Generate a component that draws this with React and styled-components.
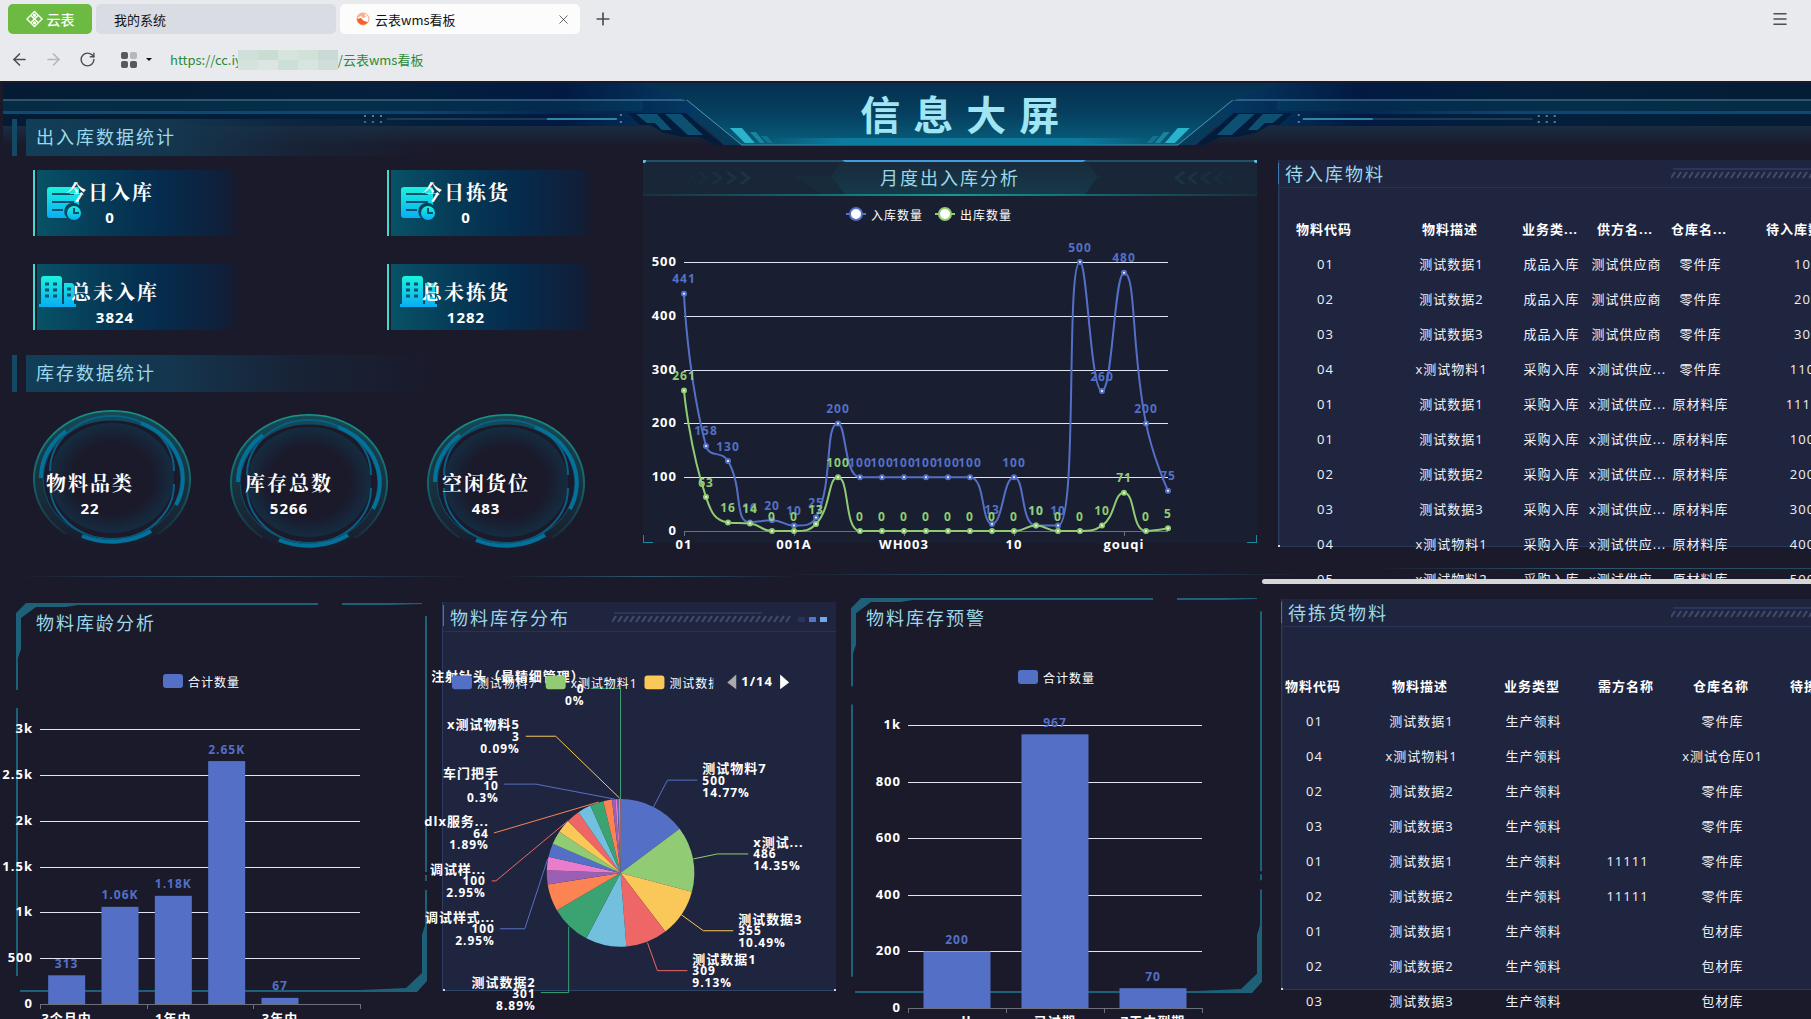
import React from 'react'
import styled, { createGlobalStyle } from 'styled-components'
import { ArrowLeft, ArrowRight, Menu, Plus, RotateCw, X } from 'lucide-react'

const GlobalStyle = createGlobalStyle`
  * {
    box-sizing: border-box;
  }
  body {
    margin: 0;
    background: #1a1a2b;
    font-family: "Open Sans", "Noto Sans CJK SC", sans-serif;
  }
  h1, h2, p {
    margin: 0;
  }
`;

const palette = ['#5470c6', '#91cc75', '#fac858', '#ee6666', '#73c0de', '#3ba272', '#fc8452', '#9a60b4', '#ea7ccc']

const monthly = {
  names: { 0: '01', 5: '001A', 10: 'WH003', 15: '10', 20: 'gouqi' },
  inbound: [441, 158, 130, 16, 20, 10, 25, 200, 100, 100, 100, 100, 100, 100, 13, 100, 10, 10, 500, 260, 480, 200, 75],
  outbound: [261, 63, 16, 14, 0, 0, 13, 100, 0, 0, 0, 0, 0, 0, 0, 0, 10, 0, 0, 10, 71, 0, 5],
}

const stats = [
  { label: '今日入库', value: '0', icon: 'doc', center: 77, iconLeft: 12 },
  { label: '今日拣货', value: '0', icon: 'doc', center: 79, iconLeft: 12 },
  { label: '总未入库', value: '3824', icon: 'building', center: 82, iconLeft: 4 },
  { label: '总未拣货', value: '1282', icon: 'building', center: 79, iconLeft: 11 },
]

const rings = [
  { label: '物料品类', value: '22' },
  { label: '库存总数', value: '5266' },
  { label: '空闲货位', value: '483' },
]

const inboundTable = {
  widths: [124, 128, 72, 78, 70, 134],
  head: ['物料代码', '物料描述', '业务类...', '供方名...', '仓库名...', '待入库数量'],
  rows: [
    ['01', '测试数据1', '成品入库', '测试供应商', '零件库', '10'],
    ['02', '测试数据2', '成品入库', '测试供应商', '零件库', '20'],
    ['03', '测试数据3', '成品入库', '测试供应商', '零件库', '30'],
    ['04', 'x测试物料1', '采购入库', 'x测试供应...', '零件库', '110'],
    ['01', '测试数据1', '采购入库', 'x测试供应...', '原材料库', '1111'],
    ['01', '测试数据1', '采购入库', 'x测试供应...', '原材料库', '100'],
    ['02', '测试数据2', '采购入库', 'x测试供应...', '原材料库', '200'],
    ['03', '测试数据3', '采购入库', 'x测试供应...', '原材料库', '300'],
    ['04', 'x测试物料1', '采购入库', 'x测试供应...', '原材料库', '400'],
    ['05', 'x测试物料2', '采购入库', 'x测试供应...', '原材料库', '500'],
  ],
}

const pickTable = {
  widths: [102, 112, 112, 76, 114, 94],
  head: ['物料代码', '物料描述', '业务类型', '需方名称', '仓库名称', '待拣货数量'],
  rows: [
    ['01', '测试数据1', '生产领料', '', '零件库', ''],
    ['04', 'x测试物料1', '生产领料', '', 'x测试仓库01', ''],
    ['02', '测试数据2', '生产领料', '', '零件库', ''],
    ['03', '测试数据3', '生产领料', '', '零件库', ''],
    ['01', '测试数据1', '生产领料', '11111', '零件库', ''],
    ['02', '测试数据2', '生产领料', '11111', '零件库', ''],
    ['01', '测试数据1', '生产领料', '', '包材库', ''],
    ['02', '测试数据2', '生产领料', '', '包材库', ''],
    ['03', '测试数据3', '生产领料', '', '包材库', ''],
  ],
}

const pieValues = [500, 486, 355, 309, 302, 301, 200, 105, 100, 100, 100, 100, 100, 100, 100, 64, 25, 15, 10, 7, 3, 3]

// every point is relative to the centre of the pie
const pieLabels = [
  { lines: ['测试物料7', '500', '14.77%'], color: 0, path: '33,-66 47,-93 77,-93', x: 82, y: -93 },
  { lines: ['x测试...', '486', '14.35%'], color: 1, path: '73,-14 97,-19 128,-19', x: 133, y: -19 },
  { lines: ['测试数据3', '355', '10.49%'], color: 2, path: '61,42 83,58 113,58', x: 118, y: 58 },
  { lines: ['测试数据1', '309', '9.13%'], color: 3, path: '27,70 37,98 67,98', x: 72, y: 98 },
  { lines: ['测试数据2', '301', '8.89%'], color: 5, path: '-52,54 -52,120 -80,120', x: -85, y: 121, end: true },
  { lines: ['调试样式...', '100', '2.95%'], color: 0, path: '-73,-14 -96,56 -121,56', x: -126, y: 56, end: true },
  { lines: ['调试样...', '100', '2.95%'], color: 3, path: '-53,-52 -125,8 -129,8', x: -135, y: 8, end: true },
  { lines: ['dlx服务...', '64', '1.89%'], color: 6, path: '-22,-71 -127,-40', x: -132, y: -40, end: true },
  { lines: ['车门把手', '10', '0.3%'], color: 0, path: '-6,-74 -85,-89 -117,-89', x: -122, y: -88, end: true },
  { lines: ['x测试物料5', '3', '0.09%'], color: 2, path: '-1,-75 -65,-137 -95,-137', x: -101, y: -137, end: true },
  { lines: ['注射针头（最精细管理）', '0', '0%'], color: 5, path: '0,-74 0,-185 -30,-185', x: -36, y: -185, end: true },
]

const smoothPath = (pts) => {
  const clamp = (v, a, b) => Math.max(Math.min(a, b), Math.min(Math.max(a, b), v))
  let d = `M${pts[0][0]},${pts[0][1]}`
  let cp = pts[0]
  for (let i = 1; i < pts.length; i++) {
    const [x, y] = pts[i]
    const prev = pts[i - 1]
    const next = pts[i + 1]
    let c1 = [x, y]
    let c2 = [x, y]
    if (next) {
      const lenPrev = Math.hypot(x - prev[0], y - prev[1])
      const lenNext = Math.hypot(next[0] - x, next[1] - y)
      const ratio = lenNext / (lenNext + lenPrev)
      const vx = next[0] - prev[0]
      const vy = next[1] - prev[1]
      c2 = [clamp(x + vx * 0.5 * ratio, x, next[0]), clamp(y + vy * 0.5 * ratio, y, next[1])]
      c1 = [x - ((c2[0] - x) * lenPrev) / lenNext, y - ((c2[1] - y) * lenPrev) / lenNext]
      c1 = [clamp(c1[0], prev[0], x), clamp(c1[1], prev[1], y)]
      c2 = [x + ((x - c1[0]) * lenNext) / lenPrev, y + ((y - c1[1]) * lenNext) / lenPrev]
    }
    d += `C${cp[0]},${cp[1]} ${c1[0]},${c1[1]} ${x},${y}`
    cp = c2
  }
  return d
}

const LogoIcon = () => (
  <svg width="17" height="18" viewBox="0 0 18 18" fill="none" stroke="#fff" strokeWidth="1.5">
    <path d="M9 1 17 9 9 17 1 9Z" />
    <path d="M5 5 13 13M13 5 5 13" />
    <circle cx="9" cy="5" r="1" fill="#fff" />
    <circle cx="9" cy="13" r="1" fill="#fff" />
  </svg>
)

const SiteIcon = () => (
  <svg width="14" height="14" viewBox="0 0 14 14">
    <circle cx="7" cy="7" r="6" fill="#fff" stroke="#f2a27c" strokeWidth="1" />
    <path d="M7 1A6 6 0 0 0 1 6L5 4 7 6 10 5 8 1Z" fill="#f9b08c" />
    <path d="M1 7 5 6 8 9 12 10A6 6 0 0 1 2 10Z" fill="#f0642c" />
  </svg>
)

const AppsIcon = () => (
  <svg width="16" height="16" viewBox="0 0 16 16" fill="#55585e">
    <rect x="0" y="0" width="7" height="7" rx="2" />
    <rect x="9" y="0" width="7" height="7" rx="2" fill="#b5b7bc" />
    <rect x="0" y="9" width="7" height="7" rx="2" />
    <rect x="9" y="9" width="7" height="7" rx="2" />
  </svg>
)

const DocIcon = () => (
  <svg width="34" height="34" viewBox="0 0 34 34">
    <defs>
      <linearGradient id="doc" x1="0" y1="0" x2="0" y2="1">
        <stop offset="0" stopColor="#1cf2dc" />
        <stop offset="1" stopColor="#08aef4" />
      </linearGradient>
    </defs>
    <path d="M3 1H30Q32 1 32 3V19A8 8 0 0 0 20 32H3Q0 32 0 29V4Q0 1 3 1Z" fill="url(#doc)" />
    <path d="M5 8H27M5 16H27M5 24H16" stroke="#07506e" strokeWidth="2" />
    <circle cx="27" cy="27" r="7" fill="url(#doc)" />
    <path d="M27 22V27H32" fill="none" stroke="#07506e" strokeWidth="2" />
  </svg>
)

const BuildingIcon = () => (
  <svg width="37" height="32" viewBox="0 0 37 32">
    <defs>
      <linearGradient id="building" x1="0" y1="0" x2="0" y2="1">
        <stop offset="0" stopColor="#1cf2dc" />
        <stop offset="1" stopColor="#08aef4" />
      </linearGradient>
    </defs>
    <path d="M0 31V28H2V3Q2 0 5 0H20Q23 0 23 3V28H25V7H32Q35 7 35 10V28H37V31Z" fill="url(#building)" />
    <path d="M6 8H10M14 8H18M6 14H10M14 14H18M6 20H10M14 20H18M28 13H32M28 19H32" stroke="#07506e" strokeWidth="3" />
  </svg>
)

const BannerSide = () => (
  <>
    <rect x="3" y="2" width="700" height="43" fill="url(#sideFill)" />
    <rect x="3" y="45" width="712" height="20" fill="url(#fade)" />
    <path d="M3 19H687L742 64" fill="none" stroke="#4f93a8" />
    <rect x="3" y="20" width="640" height="10" fill="#0a4a66" opacity=".35" />
    <rect x="3" y="30" width="620" height="3" fill="url(#rail)" />
    <path d="M387 38H547" stroke="#31586b" />
    <path d="M547 38H617" stroke="#2f86a3" strokeWidth="2" />
    <path d="M364 35h2m6 0h2m6 0h2M364 41h2m6 0h2m6 0h2M620 34h2M620 41h2" stroke="#54808e" strokeWidth="2" />
    <path d="M628 32H686L722 64H716L700 56H684L664 52 650 44H640Z" fill="#031c3c" />
    <path d="M636 33H646L656 42H647ZM646 33H657L672 49H662ZM665 33H681L703 54H688Z" fill="#0d5072" />
    <path d="M690 33H704L742 64H724Z" fill="#083a5c" />
  </>
)

const BannerArt = () => (
  <BannerSvg viewBox="0 0 1920 66" preserveAspectRatio="none" aria-hidden="true">
    <defs>
      <linearGradient id="sideFill" x1="0" x2="1">
        <stop offset="0" stopColor="#051b33" />
        <stop offset=".55" stopColor="#03203c" />
        <stop offset=".8" stopColor="#021a42" />
        <stop offset="1" stopColor="#053a66" />
      </linearGradient>
      <linearGradient id="fade" x1="0" y1="0" x2="0" y2="1">
        <stop offset="0" stopColor="#1a2c40" />
        <stop offset="1" stopColor="#1a1a2b" />
      </linearGradient>
      <linearGradient id="rail" x1="0" x2="1">
        <stop offset="0" stopColor="#0d4c72" />
        <stop offset=".65" stopColor="#0b4672" />
        <stop offset="1" stopColor="#0b4672" stopOpacity="0" />
      </linearGradient>
      <linearGradient id="centerFill" x1="0" y1="0" x2="0" y2="1">
        <stop offset="0" stopColor="#05304f" />
        <stop offset=".5" stopColor="#064060" />
        <stop offset="1" stopColor="#085f7c" />
      </linearGradient>
      <linearGradient id="baseGlow" x1="0" x2="1">
        <stop offset="0" stopColor="#0d7ba0" stopOpacity="0" />
        <stop offset=".2" stopColor="#0d7ba0" />
        <stop offset=".8" stopColor="#0d7ba0" />
        <stop offset="1" stopColor="#0d7ba0" stopOpacity="0" />
      </linearGradient>
    </defs>
    <g><BannerSide /></g>
    <g transform="translate(1920 0) scale(-1 1)"><BannerSide /></g>
    <path d="M640 2H1280L1233 20 1178 64H742L687 20Z" fill="url(#centerFill)" />
    <path d="M687 19 742 64H1178L1233 19" fill="none" stroke="#4f93a8" />
    <rect x="770" y="57" width="380" height="7" fill="url(#baseGlow)" />
    <g fill="#2bb3cc">
      <path d="M730 47H742L755 62H745ZM1190 47H1178L1165 62H1175Z" />
      <path d="M750 51H756L765 62H760ZM1170 51H1164L1155 62H1160Z" opacity=".5" />
      <path d="M761 55H767L773 62H768ZM1159 55H1153L1147 62H1152Z" opacity=".3" />
    </g>
  </BannerSvg>
)

const RingArt = () => (
  <svg width="158" height="134" viewBox="0 0 158 134" fill="none" aria-hidden="true">
    <defs>
      <linearGradient id="ringEdge" x1="0" y1="0" x2="0" y2="1">
        <stop offset="0" stopColor="#1b9488" />
        <stop offset=".6" stopColor="#14606a" />
        <stop offset="1" stopColor="#1a2a3a" />
      </linearGradient>
      <radialGradient id="ringGlow">
        <stop offset=".65" stopColor="#0c4d68" stopOpacity="0" />
        <stop offset="1" stopColor="#0c4d68" stopOpacity=".35" />
      </radialGradient>
      <linearGradient id="ringBand" x1="0" y1="0" x2="0" y2="1">
        <stop offset="0" stopColor="#12545c" stopOpacity=".8" />
        <stop offset="1" stopColor="#12545c" stopOpacity=".05" />
      </linearGradient>
    </defs>
    <path d="M33 124A78 68 0 1 1 125 124" stroke="url(#ringEdge)" strokeWidth="2" />
    <ellipse cx="79" cy="69" rx="73" ry="63" stroke="url(#ringBand)" strokeWidth="9" />
    <ellipse cx="79" cy="68" rx="62" ry="55" fill="url(#ringGlow)" />
    <path d="M17 61A62 55 0 0 1 141 61M141 74A62 55 0 0 1 17 74" stroke="#0a5f85" strokeWidth="2" />
    <ellipse cx="79" cy="69" rx="69" ry="60" stroke="#0c4d6a" />
    <path d="M8 68A71 61 0 0 1 33 21M108 13A70 61 0 0 1 143 95M118 121A71 64 0 0 1 49 126" stroke="#04719a" strokeWidth="4" />
  </svg>
)

const FrameArt = () => (
  <FrameSvg viewBox="0 0 411 390" preserveAspectRatio="none" aria-hidden="true">
    <g fill="#1d6077">
      <path d="M0 10 10 0H302V2H62L50 4H20L5 15V46L2 55V87H0Z" />
      <path d="M326 0H406V1L372 2H326ZM0 105H2V373H0ZM4 387H400V389H4ZM409 13H411V269H409ZM409 272H411V278H409Z" />
      <path d="M411 287V378L401 389H345V387L390 385 406 370V332L409 322V287Z" />
    </g>
  </FrameSvg>
)

const HatchArt = ({ dots }) => (
  <HatchSvg width="216" height="12" viewBox="0 0 216 12" aria-hidden="true">
    <path d="M2 1H150" stroke="#32467a" />
    {Array.from({ length: 30 }, (_, i) => (
      <path key={i} d={`M${i * 6} 10 L${i * 6 + 4} 4`} stroke="#414c6a" strokeWidth="2" />
    ))}
    {dots && (
      <>
        <rect x="186" y="5" width="7" height="5" fill="#2a3263" />
        <rect x="197" y="5" width="7" height="5" fill="#4f76cc" />
        <rect x="208" y="5" width="7" height="5" fill="#70a8ec" />
      </>
    )}
  </HatchSvg>
)

const TrendHeadArt = () => (
  <TrendHeadSvg viewBox="0 0 614 36" preserveAspectRatio="none" aria-hidden="true">
    <defs>
      <linearGradient id="trendBase" x1="0" x2="1">
        <stop offset="0" stopColor="#128c8c" stopOpacity=".1" />
        <stop offset=".5" stopColor="#159a94" />
        <stop offset="1" stopColor="#128c8c" stopOpacity=".1" />
      </linearGradient>
      <linearGradient id="trendFill" x1="0" y1="0" x2="0" y2="1">
        <stop offset="0" stopColor="#192a3c" />
        <stop offset="1" stopColor="#153a49" />
      </linearGradient>
    </defs>
    <rect width="614" height="36" fill="#182637" />
    <path d="M150 16H460L430 35H180Z" fill="#182b3b" />
    <path d="M188 16 199 2H443L455 16 442 35H203Z" fill="url(#trendFill)" />
    <path d="M0 1H614" stroke="#2a7d9a" />
    <path d="M199 0H443L440 2H202Z" fill="#3f9fdd" />
    <circle cx="1" cy="1" r="2" fill="#63c0dc" />
    <circle cx="613" cy="1" r="2" fill="#63c0dc" />
    <rect y="34" width="614" height="2" fill="url(#trendBase)" />
    <g stroke="#1b3848" strokeWidth="3" fill="none">
      {[0, 1, 2, 3, 4, 5].map((i) => (
        <g key={i} opacity={0.1 + i * 0.14}>
          <path d={`M${28 + i * 14} 12 L${36 + i * 14} 18 L${28 + i * 14} 24`} />
          <path d={`M${606 - i * 13} 12 L${598 - i * 13} 18 L${606 - i * 13} 24`} />
        </g>
      ))}
    </g>
  </TrendHeadSvg>
)

const TrendChart = () => {
  const px = (i) => 41 + i * 22
  const py = (v) => 335 - v * 0.538
  const series = [
    { data: monthly.inbound, color: palette[0] },
    { data: monthly.outbound, color: palette[1] },
  ]
  return (
    <ChartSvg viewBox="0 0 614 356" $height={356} role="img" aria-label="月度出入库分析">
      {[['入库数量', 213, '#5470c6'], ['出库数量', 302, '#91cc75']].map(([name, x, color]) => (
        <g key={name}>
          <path d={`M${x - 10} 18H${x + 10}`} stroke={color} strokeWidth="2" />
          <circle cx={x} cy="18" r="6" fill="#fff" stroke={color} strokeWidth="2" />
          <LegendText x={x + 15} y="19">{name}</LegendText>
        </g>
      ))}
      {[0, 100, 200, 300, 400, 500].map((v) => (
        <g key={v}>
          <path d={`M41 ${Math.round(py(v)) + 0.5}H525`} stroke={v ? '#e0e6f1' : '#6e7079'} />
          <AxisText x="34" y={py(v) - 1} textAnchor="end">{v}</AxisText>
        </g>
      ))}
      {Object.keys(monthly.names).map((i) => (
        <g key={i}>
          <path d={`M${px(i) + 0.5} 335v5`} stroke="#6e7079" />
          <AxisText x={px(i)} y="348" textAnchor="middle">{monthly.names[i]}</AxisText>
        </g>
      ))}
      {series.map(({ data, color }) => (
        <g key={color}>
          <path d={smoothPath(data.map((v, i) => [px(i), py(v)]))} fill="none" stroke={color} strokeWidth="2" />
          {data.map((v, i) => (
            <g key={i}>
              <circle cx={px(i)} cy={py(v)} r="2" fill="#fff" stroke={color} strokeWidth="2" />
              <ValueText x={px(i)} y={py(v) - 15} fill={color}>{v}</ValueText>
            </g>
          ))}
        </g>
      ))}
    </ChartSvg>
  )
}

const BarChart = ({ label, width, left, right, top, bottom, max, ticks, bars, barWidth, slots, names, nameY, legendX, legendY, tickEvery }) => {
  const step = (right - left) / slots
  const py = (v) => bottom - ((bottom - top) * v) / max
  return (
    <ChartSvg viewBox={`0 0 ${width} 400`} $height={400} role="img" aria-label={label}>
      <rect x={legendX} y={legendY - 7} width="20" height="14" rx="3" fill={palette[0]} />
      <LegendText x={legendX + 25} y={legendY + 1}>合计数量</LegendText>
      {ticks.map(([text, v]) => (
        <g key={text}>
          <path d={`M${left} ${Math.round(py(v)) + 0.5}H${right}`} stroke={v ? '#e0e6f1' : '#6e7079'} />
          <AxisText x={left - 7} y={py(v) - 1} textAnchor="end">{text}</AxisText>
        </g>
      ))}
      {Array.from({ length: slots / tickEvery + 1 }, (_, i) => (
        <path key={i} d={`M${Math.round(left + i * step * tickEvery) + 0.5} ${bottom}v5`} stroke="#6e7079" />
      ))}
      {bars.map(([text, v], i) => (
        <g key={text}>
          <rect x={left + step * (i + 0.5) - barWidth / 2} y={py(v)} width={barWidth} height={bottom - py(v)} fill={palette[0]} />
          <ValueText x={left + step * (i + 0.5)} y={py(v) - 12} fill={palette[0]}>{text}</ValueText>
        </g>
      ))}
      {names.map(([text, i]) => (
        <AxisText key={text} x={left + step * (i + 0.5)} y={nameY} textAnchor="middle">{text}</AxisText>
      ))}
    </ChartSvg>
  )
}

const PieChart = () => {
  const total = pieValues.reduce((a, b) => a + b, 0)
  const point = (v) => {
    const a = (v / total) * Math.PI * 2
    return `${74 * Math.sin(a)},${-74 * Math.cos(a)}`
  }
  let sum = 0
  return (
    <ChartSvg viewBox="0 0 394 400" $height={400} role="img" aria-label="物料库存分布">
      <defs>
        <clipPath id="legendA"><rect x="0" y="30" width="91" height="40" /></clipPath>
        <clipPath id="legendB"><rect x="0" y="30" width="271" height="40" /></clipPath>
      </defs>
      <g transform="translate(178 241)">
        {pieValues.map((v, i) => {
          const from = point(sum)
          sum += v
          return <path key={i} d={`M0,0L${from}A74,74 0 0 1 ${point(sum)}Z`} fill={palette[i % 9]} />
        })}
        {pieLabels.map((l) => (
          <g key={l.lines[0]}>
            <polyline points={l.path} fill="none" stroke={palette[l.color]} />
            {l.lines.map((text, i) => (
              <PieText key={text} $name={i === 0} x={l.x} y={l.y + (i - 1) * 12} textAnchor={l.end ? 'end' : 'start'}>{text}</PieText>
            ))}
          </g>
        ))}
      </g>
      <rect x="9" y="43" width="20" height="14" rx="3" fill={palette[0]} />
      <LegendText x="34" y="51" clipPath="url(#legendA)">测试物料7</LegendText>
      <rect x="103" y="43" width="20" height="14" rx="3" fill={palette[1]} />
      <LegendText x="128" y="51">x测试物料1</LegendText>
      <rect x="202" y="43" width="20" height="14" rx="3" fill={palette[2]} />
      <LegendText x="227" y="51" clipPath="url(#legendB)">测试数据3</LegendText>
      <path d="M294 42V57L285 50Z" fill="#aaa" />
      <AxisText x="299" y="49">1/14</AxisText>
      <path d="M338 42V57L347 50Z" fill="#fff" />
    </ChartSvg>
  )
}

const DataTable = ({ data }) => (
  <Table>
    <colgroup>
      {data.widths.map((w, i) => <Col key={i} $width={w} />)}
    </colgroup>
    <thead>
      <tr>{data.head.map((h) => <th key={h}>{h}</th>)}</tr>
    </thead>
    <tbody>
      {data.rows.map((row, i) => (
        <tr key={i}>{row.map((cell, j) => <td key={j}>{cell}</td>)}</tr>
      ))}
    </tbody>
  </Table>
)

const App = () => {
  return (
    <>
      <GlobalStyle />
      <Page>
        <Browser>
          <TabRow>
            <BrandButton><LogoIcon />云表</BrandButton>
            <Tab>我的系统</Tab>
            <Tab $active>
              <SiteIcon />
              云表wms看板
              <CloseIcon size={15} strokeWidth={1} />
            </Tab>
            <NewTabButton aria-label="新标签页"><Plus size={20} strokeWidth={2} /></NewTabButton>
            <MenuButton aria-label="菜单"><Menu size={18} strokeWidth={2} /></MenuButton>
          </TabRow>
          <AddressRow>
            <IconButton aria-label="后退"><ArrowLeft size={19} /></IconButton>
            <IconButton aria-label="前进" $muted><ArrowRight size={19} /></IconButton>
            <IconButton aria-label="刷新"><RotateCw size={17} /></IconButton>
            <AppsButton aria-label="应用"><AppsIcon /><Caret /></AppsButton>
            <Address href="#">
              https://cc.iy
              <Mosaic>
                {['#cfe0da', '#c9ddd3', '#d6e4dd', '#d0e2d8', '#c8d9d6', '#d4e3db', '#dbe6e2', '#cde0d5', '#d8e4df', '#cfded9'].map((c, i) => (
                  <MosaicCell key={i} $color={c} />
                ))}
              </Mosaic>
              /云表wms看板
            </Address>
          </AddressRow>
        </Browser>

        <Dashboard>
          <Banner>
            <BannerArt />
            <BannerTitle>信息大屏</BannerTitle>
          </Banner>

          <TopRow>
            <LeftColumn>
              <SectionBar><h2>出入库数据统计</h2></SectionBar>
              <StatGrid>
                {stats.map((s) => (
                  <StatCard key={s.label} $low={s.icon === 'building'}>
                    <StatIcon $left={s.iconLeft} $top={s.icon === 'doc' ? 16 : 12}>
                      {s.icon === 'doc' ? <DocIcon /> : <BuildingIcon />}
                    </StatIcon>
                    <StatText $center={s.center}>
                      <StatLabel>{s.label}</StatLabel>
                      <StatValue>{s.value}</StatValue>
                    </StatText>
                  </StatCard>
                ))}
              </StatGrid>
              <SectionBar><h2>库存数据统计</h2></SectionBar>
              <RingRow>
                {rings.map((r) => (
                  <Ring key={r.label}>
                    <RingArt />
                    <RingText>
                      <StatLabel>{r.label}</StatLabel>
                      <StatValue>{r.value}</StatValue>
                    </RingText>
                  </Ring>
                ))}
              </RingRow>
            </LeftColumn>

            <TrendPanel>
              <TrendHead>
                <TrendHeadArt />
                <h2>月度出入库分析</h2>
              </TrendHead>
              <TrendChart />
            </TrendPanel>

            <TableArea $top={41} $height={387} $inset={16}>
              <PanelHead $wide $inset={16}>
                <h2>待入库物料</h2>
                <HatchArt />
              </PanelHead>
              <TableWrap $top={23}>
                <DataTable data={inboundTable} />
              </TableWrap>
              <ScrollBar />
            </TableArea>
          </TopRow>

          <BottomRow>
            <FramePanel $top={25} $left={16} $frameTop={19} $frameHeight={390} $pad={36}>
              <FrameArt />
              <h2>物料库龄分析</h2>
              <BarChart
                label="物料库龄分析"
                width={442} left={40} right={360} top={92} bottom={367}
                max={3000}
                ticks={[['0', 0], ['500', 500], ['1k', 1000], ['1.5k', 1500], ['2k', 2000], ['2.5k', 2500], ['3k', 3000]]}
                bars={[['313', 313], ['1.06K', 1060], ['1.18K', 1180], ['2.65K', 2650], ['67', 67]]}
                names={[['3个月内', 0], ['1年内', 2], ['3年内', 4]]}
                slots={6} tickEvery={2} barWidth={37} nameY={381} legendX={163} legendY={44}
              />
            </FramePanel>

            <PiePanel>
              <PanelHead>
                <h2>物料库存分布</h2>
                <HatchArt dots />
              </PanelHead>
              <PieChart />
            </PiePanel>

            <FramePanel $top={20} $left={15} $frameTop={14} $frameHeight={396} $pad={30}>
              <FrameArt />
              <h2>物料库存预警</h2>
              <BarChart
                label="物料库存预警"
                width={421} left={72} right={366} top={93} bottom={376}
                max={1000}
                ticks={[['0', 0], ['200', 200], ['400', 400], ['600', 600], ['800', 800], ['1k', 1000]]}
                bars={[['200', 200], ['967', 967], ['70', 70]]}
                names={[['null', 0], ['已过期', 1], ['7天内到期', 2]]}
                slots={3} tickEvery={1} barWidth={67} nameY={389} legendX={182} legendY={45}
              />
            </FramePanel>

            <TableArea $top={15} $height={391} $inset={19}>
              <PanelHead $wide $inset={19}>
                <h2>待拣货物料</h2>
                <HatchArt />
              </PanelHead>
              <TableWrap $top={41}>
                <DataTable data={pickTable} />
              </TableWrap>
            </TableArea>
          </BottomRow>
        </Dashboard>
      </Page>
    </>
  )
}

export default App;

const Page = styled.div`
  display: flex;
  flex-direction: column;
  height: 100vh;
  overflow: hidden;
`;

const Browser = styled.div`
  flex: none;
  height: 81px;
  background: #e8eaee;
  font-family: "Noto Sans CJK SC", sans-serif;
  font-size: 13px;
`;

const TabRow = styled.div`
  display: flex;
  align-items: center;
  gap: 4px;
  height: 38px;
  padding: 0 20px 0 8px;
`;

const BrandButton = styled.button`
  display: flex;
  align-items: center;
  justify-content: center;
  gap: 4px;
  width: 84px;
  height: 30px;
  border: 0;
  border-radius: 5px;
  background: #6cba42;
  color: #fff;
  font: 500 14px "Noto Sans CJK SC", sans-serif;
`;

const Tab = styled.button`
  display: flex;
  align-items: center;
  gap: 5px;
  width: 240px;
  height: 30px;
  padding: 0 9px 0 ${({ $active }) => ($active ? '16px' : '18px')};
  border: 0;
  border-radius: 5px;
  background: ${({ $active }) => ($active ? '#fcfcfd' : '#d9dce3')};
  color: #111;
  font: 13px "Noto Sans CJK SC", sans-serif;
`;

const CloseIcon = styled(X)`
  margin-left: auto;
`;

const IconButton = styled.button`
  display: flex;
  align-items: center;
  justify-content: center;
  width: 34px;
  height: 30px;
  padding: 0;
  border: 0;
  background: none;
  color: ${({ $muted }) => ($muted ? '#b4b6bb' : '#4a4d53')};
`;

const NewTabButton = styled(IconButton)`
  width: 38px;
`;

const MenuButton = styled(IconButton)`
  width: 22px;
  margin-left: auto;
`;

const AddressRow = styled.div`
  display: flex;
  align-items: center;
  height: 43px;
  padding: 0 2px;
`;

const AppsButton = styled(IconButton)`
  width: 54px;
  margin: 0 7px 0 5px;
  gap: 9px;
`;

const Caret = styled.span`
  border: 3px solid transparent;
  border-top-color: #111;
  border-bottom: 0;
`;

const Address = styled.a`
  display: flex;
  align-items: center;
  color: #2a8a35;
  text-decoration: none;
  white-space: nowrap;
`;

const Mosaic = styled.span`
  display: grid;
  grid-template-columns: repeat(5, 20px);
  grid-auto-rows: 10px;
  margin-left: -4px;
  position: relative;
`;

const MosaicCell = styled.span`
  background: ${({ $color }) => $color};
`;

const Dashboard = styled.main`
  position: relative;
  flex: 1;
  overflow: hidden;
  background: #1a1a2b;
  letter-spacing: 1px;

  h2 {
    position: relative;
    color: #9bd9ea;
    font-size: 18px;
    font-weight: 400;
    line-height: 28px;
    letter-spacing: 2px;
    white-space: nowrap;
  }
`;

const Banner = styled.header`
  position: relative;
  width: 106%;
  height: 38px;
`;

const BannerSvg = styled.svg`
  position: absolute;
  top: 0;
  left: 0;
  width: 100%;
  height: 66px;
`;

const BannerTitle = styled.h1`
  position: relative;
  padding-left: 13px;
  color: #a0e5f4;
  font-size: 40px;
  font-weight: 700;
  line-height: 68px;
  letter-spacing: 13px;
  text-align: center;
`;

const TopRow = styled.div`
  position: relative;
  display: grid;
  grid-template-columns: 643fr 614fr 554fr;
  height: 465px;
  background:
    linear-gradient(90deg, transparent, #2c5a70, transparent) 15px 457px / 460px 1px no-repeat,
    linear-gradient(90deg, transparent, #2c5a70, transparent) 500px 457px / 300px 1px no-repeat,
    linear-gradient(90deg, transparent, #24485c, #24485c, transparent) 780px 455px / 530px 1px no-repeat,
    linear-gradient(90deg, transparent, #2c5a70, #24485c) 1370px 449px / 441px 1px no-repeat;
`;

const LeftColumn = styled.section`
  position: relative;
`;

const SectionBar = styled.div`
  display: flex;
  align-items: center;
  height: 37px;
  margin-left: 12px;
  padding: 0 0 2px 24px;
  background:
    linear-gradient(#124a66, #124a66) 0 0 / 5px 100% no-repeat,
    linear-gradient(90deg, #123e58, #14364f 35%, rgba(22, 44, 66, 0.5) 65%, transparent) 14px 0 / 410px 100% no-repeat;
`;

const StatGrid = styled.div`
  display: grid;
  grid-template-columns: 204px 204px;
  column-gap: 150px;
  row-gap: 28px;
  padding: 14px 0 25px 33px;
`;

const StatCard = styled.div`
  position: relative;
  height: 66px;
  padding-top: ${({ $low }) => ($low ? '16px' : '10px')};
  border-left: 2px solid #3fdcd6;
  background: linear-gradient(90deg, #085266, #063c58 30%, #052c4e 60%, #101f3a 92%, transparent) 2px 0 no-repeat;
`;

const StatIcon = styled.span`
  position: absolute;
  top: ${({ $top }) => $top}px;
  left: ${({ $left }) => $left}px;
  line-height: 0;
`;

const StatText = styled.div`
  position: relative;
  width: ${({ $center }) => $center * 2}px;
  margin-left: -2px;
  text-align: center;
`;

const StatLabel = styled.p`
  color: #fff;
  font-family: "Liberation Serif", "Noto Serif CJK SC", "Noto Sans CJK SC", serif;
  font-size: 20px;
  font-weight: 700;
  line-height: 26px;
  letter-spacing: 2px;
`;

const StatValue = styled.p`
  color: #fff;
  font-size: 15px;
  font-weight: 700;
  line-height: 22px;
`;

const RingRow = styled.div`
  display: flex;
  gap: 39px;
  padding: 18px 0 0 33px;
`;

const RingText = styled.div`
  position: absolute;
  top: 61px;
  left: 0;
  width: 114px;
  text-align: center;
`;

const Ring = styled.div`
  position: relative;
  width: 158px;
  height: 134px;

  & + & {
    margin-top: 4px;
  }
  & + & ${RingText} {
    top: 57px;
    width: 118px;
  }
`;

const TrendPanel = styled.section`
  height: 383px;
  margin-top: 41px;
  background:
    linear-gradient(#1b8a9a, #1b8a9a) 0 100% / 10px 1px no-repeat,
    linear-gradient(#1b8a9a, #1b8a9a) 0 100% / 1px 8px no-repeat,
    linear-gradient(#1b8a9a, #1b8a9a) 100% 100% / 10px 1px no-repeat,
    linear-gradient(#1b8a9a, #1b8a9a) 100% 100% / 1px 8px no-repeat,
    #191e31;
`;

const TrendHead = styled.div`
  position: relative;
  display: flex;
  align-items: center;
  justify-content: center;
  height: 36px;
`;

const TrendHeadSvg = styled.svg`
  position: absolute;
  inset: 0;
  width: 100%;
  height: 100%;
`;

const ChartSvg = styled.svg`
  display: block;
  position: relative;
  width: 100%;
  height: ${({ $height }) => $height}px;
  overflow: visible;
`;

const ChartText = styled.text`
  font-size: 12px;
  dominant-baseline: central;
`;

const LegendText = styled(ChartText)`
  fill: #fff;
`;

const AxisText = styled(ChartText)`
  fill: #fff;
  font-size: 13px;
  font-weight: 700;
`;

const ValueText = styled(ChartText)`
  font-weight: 700;
  text-anchor: middle;
`;

const PieText = styled(ChartText)`
  fill: #fff;
  font-size: ${({ $name }) => ($name ? '13px' : '12px')};
  font-weight: 700;
`;

const TableArea = styled.section`
  position: relative;
  display: flex;
  flex-direction: column;
  min-width: 0;
  padding: ${({ $top }) => $top}px 0 0 5px;
  overflow: hidden;
  background:
    linear-gradient(#3b78b4, #3b78b4) ${({ $inset }) => $inset + 5}px ${({ $top }) => $top + 3}px / 1px 21px no-repeat,
    linear-gradient(#c8d4e8, #c8d4e8) ${({ $inset }) => $inset + 5}px ${({ $top, $height }) => $top + $height - 2}px / 2px 2px no-repeat,
    linear-gradient(#29385a, #29385a) ${({ $inset }) => $inset + 5}px ${({ $top, $height }) => $top + $height - 1}px / 100% 1px no-repeat,
    linear-gradient(90deg, #2b4468, #20253f 2px) ${({ $inset }) => $inset + 5}px ${({ $top }) => $top}px / 100% ${({ $height }) => $height}px no-repeat;
`;

const PanelHead = styled.div`
  position: relative;
  display: flex;
  justify-content: space-between;
  align-items: center;
  flex: none;
  height: 28px;
  margin-left: ${({ $inset = 0 }) => $inset}px;
  padding: 0 ${({ $wide }) => ($wide ? '0' : '8px')} 0 7px;
  border-bottom: 1px solid #283353;
  overflow: hidden;
  ${({ $wide }) => $wide && `
    > svg {
      margin-right: -76px;
    }
  `}
`;

const HatchSvg = styled.svg`
  flex: none;
`;

const TableWrap = styled.div`
  flex: 1;
  min-height: 0;
  padding-top: ${({ $top }) => $top}px;
  overflow: hidden;
`;

const Table = styled.table`
  width: 606px;
  table-layout: fixed;
  border-collapse: collapse;
  color: #eef2f8;
  font-size: 13px;

  th, td {
    height: 35px;
    padding: 0;
    text-align: center;
    white-space: nowrap;
  }
  th {
    color: #fff;
    font-weight: 700;
  }
  td {
    padding-left: 3px;
  }
`;

const Col = styled.col`
  width: ${({ $width }) => $width}px;
`;

const ScrollBar = styled.div`
  flex: none;
  height: 5px;
  border-radius: 3px 0 0 3px;
  background: #d6d6d8;
`;

const BottomRow = styled.div`
  display: grid;
  grid-template-columns: 442fr 394fr 421fr 554fr;
  height: 435px;
`;

const FramePanel = styled.section`
  position: relative;
  padding-top: ${({ $top }) => $top}px;
  > h2 {
    padding-left: ${({ $pad }) => $pad}px;
  }
  > svg:first-child {
    top: ${({ $frameTop }) => $frameTop}px;
    left: ${({ $left }) => $left}px;
    height: ${({ $frameHeight }) => $frameHeight}px;
  }
`;

const FrameSvg = styled.svg`
  position: absolute;
  width: 411px;
`;

const PiePanel = styled.section`
  height: 389px;
  margin-top: 18px;
  padding-top: 2px;
  border-left: 1px solid #2b3d60;
  background:
    linear-gradient(#c8d4e8, #c8d4e8) 0 100% / 2px 2px no-repeat,
    linear-gradient(#c8d4e8, #c8d4e8) 100% 100% / 2px 2px no-repeat,
    linear-gradient(#3b78b4, #3b78b4) 0 3px / 1px 21px no-repeat,
    linear-gradient(#2b4468, #2b4468) 0 100% / 100% 1px no-repeat,
    #20253f;
`;
